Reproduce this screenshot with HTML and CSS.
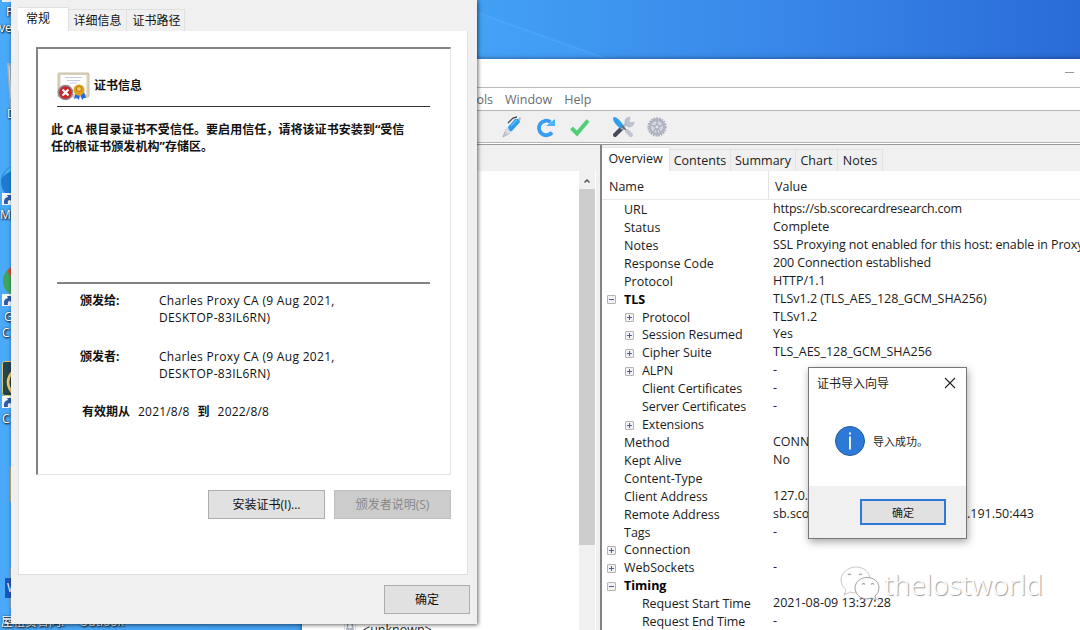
FILE: index.html
```html
<!DOCTYPE html>
<html lang="zh-CN">
<head>
    <meta charset="UTF-8">
    <meta name="viewport" content="width=device-width, initial-scale=1.0">
    <title>Charles</title>
    <link rel="stylesheet" href="styles.css">
</head>
<body>
<div class="desktop">
    <svg class="wallpaper" width="1080" height="60" viewBox="0 0 1080 60">
        <path d="M470 10 L610 60 L470 60Z" fill="#48a6ff" opacity=".3"/>
        <path d="M470 10 L610 60" stroke="#57adff" stroke-width="2" opacity=".4"/>
    </svg>

    <!-- desktop icons -->
    <svg class="icons" width="12" height="630" viewBox="0 0 12 630">
        <path d="M2 0h9v2H2z" fill="#e8eef5"/>
        <path d="M7 63h5v47h-2z" fill="#9fb4bf"/>
        <path d="M9 66l2 32" stroke="#dce6ea"/>
        <circle cx="18" cy="182" r="17" fill="#1d7cd0"/>
        <path d="M2 178q3-8 10-12v5q-6 2-10 7z" fill="#48b5e9"/>
        <circle cx="19" cy="281" r="16" fill="#40a45c"/>
        <path d="M7 271l5-5v12z" fill="#d94a3b"/>
        <rect x="2.500" y="361.500" width="30" height="34" rx="2" fill="#244450" stroke="#ddca72"/>
        <path d="M14 370q-12 12 0 25" fill="none" stroke="#f4ce62" stroke-width="2.500"/>
        <path d="M10 467h2v35h-2z" fill="#c9b47c"/>
        <path d="M10 568h2v40h-2z" fill="#98aebd"/>
        <rect x="5" y="578" width="10" height="20" fill="#1d55b8"/>
        <g fill="#f4f6f8">
            <rect x="2" y="193" width="11" height="12"/>
            <rect x="2" y="294" width="11" height="12"/>
            <rect x="2" y="396" width="11" height="12"/>
        </g>
        <g fill="#2c5da8">
            <path id="arrow" d="M4 204q-1-6 4-7l-1-2h5v7l-2-2q-3 0-2 4z"/>
            <use href="#arrow" y="101"/>
            <use href="#arrow" y="203"/>
        </g>
    </svg>
    <span class="label l1">P</span>
    <span class="label l2">ve</span>
    <span class="label l3">D</span>
    <span class="label l4">M</span>
    <span class="label l5">G</span>
    <span class="label l6">C</span>
    <span class="label l7">C</span>
    <span class="label l8">W</span>
    <span class="label l9">屋租赁合同.</span>
    <span class="label l10">Outlook</span>

    <!-- Charles main window -->
    <div class="charles">
        <div class="titlebar"><span class="minimize"></span></div>
        <div class="menu"><span>Tools</span><span>Window</span><span>Help</span></div>
        <div class="toolbar">
            <svg width="22" height="24" viewBox="0 0 22 24">
                <path d="M2 22L5 14 9 18z" fill="#c9ccda" stroke="#9da0b3" stroke-width=".7"/>
                <path d="M6 12l5 5-4 2-3-3z" fill="#d9dbe7"/>
                <path d="M7 12L14 4 18 4 19 7 11 16Q8 17 7 12z" fill="#2e9be9"/>
                <path d="M10 11l6-6" stroke="#64c0fb" stroke-width="1.500"/>
                <path d="M7 8l5-5 4-1" fill="none" stroke="#444a58" stroke-width="1.300"/>
                <path d="M17 4l2-2 1 1-1 3z" fill="#b5b9c7"/>
            </svg>
            <svg width="22" height="24" viewBox="0 0 22 24">
                <path d="M17 17.500A7.300 7.300 0 1 1 15.500 7" fill="none" stroke="#399cf4" stroke-width="3.800"/>
                <path d="M11 11h9V4z" fill="#48b2fa"/>
            </svg>
            <svg width="22" height="24" viewBox="0 0 22 24">
                <path d="M2.500 13L8 18.500 19 5.500" fill="none" stroke="#52ce79" stroke-width="4"/>
            </svg>
            <svg class="tools" width="24" height="24" viewBox="0 0 24 24">
                <path d="M4 20L12 12" stroke="#46495a" stroke-width="4" stroke-linecap="round"/>
                <path d="M10 14L17 7" stroke="#b7bac9" stroke-width="3"/>
                <path d="M14 8q-1-5 5-6l-1 4 2 2 3-1q0 5-6 5z" fill="#bfc2d0" stroke="#a2a5b8" stroke-width=".5"/>
                <path d="M3 2q4 0 10 9l-3 3Q2 8 2 3z" fill="#309fe9"/>
                <path d="M11 11l7 7" stroke="#5a6072" stroke-width="1.500"/>
                <path d="M16 16l4 4" stroke="#c1c4d2" stroke-width="4" stroke-linecap="round"/>
            </svg>
            <svg class="gear" width="22" height="24" viewBox="0 0 22 24">
                <circle cx="11" cy="12" r="8.800" fill="none" stroke="#a9adbd" stroke-width="1.800" stroke-dasharray="1.700 1"/>
                <circle cx="11" cy="12" r="7.200" fill="#d4d6df" stroke="#b0b3c2" stroke-width="2.400"/>
                <circle cx="11" cy="12" r="2.300" fill="#dfe0e7" stroke="#9da1b2"/>
                <path d="M11 6v4M11 14v4M5.300 10.200l3.800 1.200M16.700 10.200l-3.800 1.200M7.500 16.800l2.300-3.200M14.500 16.800l-2.300-3.200" stroke="#9da1b2"/>
            </svg>
        </div>
        <div class="split">
            <div class="left">
                <div class="tree">
                    <svg width="12" height="14" viewBox="0 0 12 14">
                        <path d="M0.500 0v13M11.500 0v13" stroke="#ddd"/>
                        <path d="M3.500 7V4q0-3 2.500-3t2.500 3v3" fill="none" stroke="#a9aebb" stroke-width="1.500"/>
                        <rect x="2" y="6" width="8" height="6" fill="#b6bac8"/>
                    </svg>
                    <span>&lt;unknown&gt;</span>
                </div>
                <div class="scrollbar">
                    <svg width="16" height="17" viewBox="0 0 16 17"><path d="M5.500 10.500L8 8l2.500 2.500" fill="none" stroke="#555" stroke-width="1.500"/></svg>
                    <div class="thumb"></div>
                </div>
            </div>
            <div class="right">
                <div class="tabs">
                    <span class="active">Overview</span><span>Contents</span><span>Summary</span><span>Chart</span><span>Notes</span>
                </div>
                <div class="row head"><span class="name">Name</span><span class="value">Value</span></div>
                <div class="rows">
                    <div class="row"><span class="name">URL</span><span class="value url">https://sb.scorecardresearch.com</span></div>
                    <div class="row"><span class="name">Status</span><span class="value">Complete</span></div>
                    <div class="row"><span class="name">Notes</span><span class="value long">SSL Proxying not enabled for this host: enable in Proxy</span></div>
                    <div class="row"><span class="name">Response Code</span><span class="value long">200 Connection established</span></div>
                    <div class="row"><span class="name">Protocol</span><span class="value">HTTP/1.1</span></div>
                    <div class="row"><span class="name bold"><i class="box minus"></i>TLS</span><span class="value">TLSv1.2 (TLS_AES_128_GCM_SHA256)</span></div>
                    <div class="row"><span class="name sub"><i class="box plus"></i>Protocol</span><span class="value">TLSv1.2</span></div>
                    <div class="row"><span class="name sub"><i class="box plus"></i>Session Resumed</span><span class="value">Yes</span></div>
                    <div class="row"><span class="name sub"><i class="box plus"></i>Cipher Suite</span><span class="value">TLS_AES_128_GCM_SHA256</span></div>
                    <div class="row"><span class="name sub"><i class="box plus"></i>ALPN</span><span class="value">-</span></div>
                    <div class="row"><span class="name sub">Client Certificates</span><span class="value">-</span></div>
                    <div class="row"><span class="name sub">Server Certificates</span><span class="value">-</span></div>
                    <div class="row"><span class="name sub"><i class="box plus"></i>Extensions</span><span class="value"></span></div>
                    <div class="row"><span class="name">Method</span><span class="value">CONNECT</span></div>
                    <div class="row"><span class="name">Kept Alive</span><span class="value">No</span></div>
                    <div class="row"><span class="name">Content-Type</span><span class="value"></span></div>
                    <div class="row"><span class="name">Client Address</span><span class="value">127.0.0.1</span></div>
                    <div class="row"><span class="name">Remote Address</span><span class="value remote"><span>sb.scorecard</span><span>6.191.50:443</span></span></div>
                    <div class="row"><span class="name">Tags</span><span class="value">-</span></div>
                    <div class="row"><span class="name"><i class="box plus"></i>Connection</span><span class="value"></span></div>
                    <div class="row"><span class="name"><i class="box plus"></i>WebSockets</span><span class="value">-</span></div>
                    <div class="row"><span class="name bold"><i class="box minus"></i>Timing</span><span class="value"></span></div>
                    <div class="row"><span class="name sub">Request Start Time</span><span class="value">2021-08-09 13:37:28</span></div>
                    <div class="row"><span class="name sub">Request End Time</span><span class="value">-</span></div>
                </div>
            </div>
        </div>
    </div>

    <!-- certificate properties -->
    <div class="cert">
        <div class="cert-tabs"><span class="active">常规</span><span>详细信息</span><span>证书路径</span></div>
        <div class="page">
            <div class="panel">
                <div class="cert-title">
                    <svg width="33" height="29" viewBox="0 0 33 29">
                        <rect x="1" y="1" width="31" height="24" rx="1" fill="#d9d1bb" stroke="#c9c0a8"/>
                        <rect x="3.500" y="3" width="26" height="19" fill="#fdfdfd"/>
                        <path d="M8 5.500h17M10 8.500h13M13 11h7" stroke="#c9cce0"/>
                        <path d="M19 20l-2 7 3-1 2 2 1-7 2 7 2-2 2 0-2-6z" fill="#2668e0"/>
                        <circle cx="22" cy="18" r="5.500" fill="#dfa01f"/>
                        <circle cx="22" cy="17" r="2.500" fill="#f3c85a" stroke="#b97a10"/>
                        <circle cx="8.500" cy="20.500" r="7.800" fill="#8c8c8c"/>
                        <circle cx="8.500" cy="20.500" r="6.300" fill="#c9252b"/>
                        <path d="M5.500 17.500l6 6M11.500 17.500l-6 6" stroke="#fff" stroke-width="2.200"/>
                    </svg>
                    <b>证书信息</b>
                </div>
                <p class="warning">此 CA 根目录证书不受信任。要启用信任，请将该证书安装到“受信<br>任的根证书颁发机构”存储区。</p>
                <div class="fields">
                    <div class="field"><b>颁发给:</b><span>Charles Proxy CA (9 Aug 2021,<br>DESKTOP-83IL6RN)</span></div>
                    <div class="field"><b>颁发者:</b><span>Charles Proxy CA (9 Aug 2021,<br>DESKTOP-83IL6RN)</span></div>
                    <div class="valid"><b>有效期从</b><span>2021/8/8</span><b>到</b><span>2022/8/8</span></div>
                </div>
            </div>
            <div class="actions">
                <span class="button">安装证书(I)...</span>
                <span class="button disabled">颁发者说明(S)</span>
            </div>
        </div>
        <div class="footer"><span class="button ok">确定</span></div>
    </div>

    <!-- import wizard message -->
    <div class="message">
        <div class="message-title">
            <span>证书导入向导</span>
            <svg width="12" height="12" viewBox="0 0 12 12"><path d="M1 1l10 10M11 1L1 11" stroke="#222" stroke-width="1.100"/></svg>
        </div>
        <div class="message-body">
            <svg width="30" height="30" viewBox="0 0 30 30">
                <circle cx="15" cy="15" r="14.500" fill="#2d79d8" stroke="#205d9c"/>
                <path d="M15 10.500V23.500M15 6.500v2" stroke="#fff" stroke-width="1.800"/>
            </svg>
            <span>导入成功。</span>
        </div>
        <div class="message-footer"><span class="button focus">确定</span></div>
    </div>

    <div class="watermark">
        <svg width="42" height="36" viewBox="0 0 42 36">
            <g fill="#fff" stroke="#a3a3a3" stroke-width="1">
                <path d="M16 1C8 1 1 7 1 14q0 6 5 10l-2 5 6-3q3 1 7 1C25 27 30 22 30 14S24 1 16 1z" stroke="#c8c8c8"/>
                <path d="M27 11.500c-7 0-12 5-12 10.500s5 11 12 11l5-1 4 2-1-4q4-3 4-8c0-6-5-10.500-12-10.500z"/>
            </g>
            <path d="M8 9q1.500-2 3 0M19 9q1.500-2 3 0M22 18.500q1.500-2 3 0M31 18.500q1.500-2 3 0" fill="none" stroke="#999" stroke-width="1.200"/>
        </svg>
        <span>thelostworld</span>
    </div>
</div>
</body>
</html>
```
FILE: styles.css
```css
body {
    margin: 0;
    font-family: "Open Sans", "Noto Sans CJK SC", sans-serif;
    font-size: 12.5px;
    color: #1b1b1b;
}
.desktop {
    position: relative;
    width: 1080px;
    height: 630px;
    overflow: hidden;
    background: linear-gradient(90deg, #4aa9f8 0, #429ff3 45%, #3785e8 75%, #2a6bd8 100%);
}
.wallpaper, .icons {
    position: absolute;
    left: 0;
    top: 0;
}
.label {
    position: absolute;
    color: #fff;
    font-size: 12px;
    line-height: 16px;
    white-space: nowrap;
    text-shadow: 1px 1px 2px #000, 0 0 2px #234;
}
.l1 { left: 6px; top: 4px; }
.l2 { left: -1px; top: 20px; }
.l3 { left: 7px; top: 106px; }
.l4 { left: 0; top: 207px; }
.l5 { left: 4px; top: 309px; }
.l6 { left: 2px; top: 325px; }
.l7 { left: 2px; top: 411px; }
.l8 { left: 7px; top: 580px; text-shadow: none; }
.l9 { left: 1px; top: 614px; }
.l10 { left: 79px; top: 614px; }

/* main window */
.charles {
    position: absolute;
    left: 302px;
    top: 59px;
    width: 800px;
    height: 600px;
    background: #fff;
    box-shadow: 0 0 5px rgba(0, 0, 0, .5);
    display: flex;
    flex-direction: column;
}
.titlebar {
    height: 28px;
    border-bottom: 1px solid #bbb;
    display: flex;
}
.minimize {
    width: 9px;
    height: 1px;
    margin: 13px 0 0 763px;
    background: #999;
}
.menu {
    height: 22px;
    display: flex;
    align-items: center;
    color: #6c6c6c;
    padding-left: 160px;
    border-bottom: 1px solid #b5b5b5;
}
.menu span {
    padding-top: 1px;
}
.menu span + span {
    margin-left: 12px;
}
.toolbar {
    height: 31px;
    background: #f0f0f0;
    border-bottom: 1px solid #b4b4b4;
    display: flex;
    align-items: center;
    gap: 12px;
    padding: 0 0 0 199px;
}
.toolbar .tools {
    margin-left: 8px;
}
.toolbar .gear {
    margin-left: -1px;
}
.split {
    flex: 1;
    margin-top: 1px;
    border-top: 1px solid #9b9b9b;
    display: flex;
    min-height: 0;
}
.left {
    width: 298px;
    box-sizing: border-box;
    border-top: 26px solid #f0f0f0;
    border-right: 4px solid #f0f0f0;
    display: flex;
    justify-content: space-between;
}
.tree {
    display: flex;
    align-items: center;
    gap: 7px;
    height: 20px;
    padding: 448px 0 0 42px;
}
.scrollbar {
    width: 16px;
    background: #f0f0f0;
    margin-right: 1px;
}
.scrollbar svg {
    display: block;
    margin-top: 1px;
}
.thumb {
    height: 356px;
    background: #cdcdcd;
}
.right {
    flex: 1;
    border-left: 2px solid #838383;
}
.tabs {
    height: 26px;
    background: #f0f0f0;
    display: flex;
    align-items: flex-end;
}
.tabs span {
    height: 22px;
    line-height: 22px;
    box-sizing: border-box;
    border: 1px solid #e3e3e3;
    border-left: 0;
    border-bottom: 0;
    text-align: center;
    width: 45px;
}
.tabs .active {
    width: 68px;
    height: 24px;
    background: #fff;
}
.tabs .active + span { width: 61px; }
.tabs .active + span + span { width: 65px; }
.tabs .active + span + span + span { width: 42px; }
.row {
    display: flex;
    height: 17.930px;
    line-height: 18px;
    white-space: nowrap;
}
.rows {
    padding-top: 1px;
}
.name {
    width: 145px;
    padding-left: 22px;
    display: flex;
    align-items: center;
}
.sub {
    width: 127px;
    padding-left: 40px;
    letter-spacing: -.1px;
}
.value {
    margin: -1px 0 0 4px;
}
.url {
    letter-spacing: -.22px;
}
.long {
    letter-spacing: -.12px;
}
.bold {
    font-weight: bold;
    color: #000;
}
.head {
    height: 28px;
    line-height: 30px;
    border-bottom: 1px solid #e8e8e8;
}
.head .name {
    width: 159px;
    padding: 3px 0 0 7px;
    box-sizing: content-box;
    height: 25px;
    border-right: 1px solid #e3e3e3;
}
.head .value {
    margin: 1px 0 0 6px;
}
.remote {
    display: flex;
    width: 261px;
    justify-content: space-between;
}
.box {
    width: 7px;
    height: 7px;
    border: 1px solid #b3b3b3;
    border-radius: 1px;
    margin: 0 8px 0 -17px;
    background: linear-gradient(#4a61a8, #4a61a8) center / 5px 1px no-repeat, #f2f2f2;
}
.sub .box {
    margin: 0 8px 0 -17px;
}
.plus {
    background: linear-gradient(#4a61a8, #4a61a8) center / 5px 1px no-repeat, linear-gradient(#4a61a8, #4a61a8) center / 1px 5px no-repeat, #f2f2f2;
}

/* certificate window */
.cert {
    position: absolute;
    left: 11px;
    top: 0;
    width: 466px;
    height: 624px;
    background: #f0f0f0;
    box-shadow: 1px 1px 4px rgba(0, 0, 0, .6);
    font-size: 12px;
    color: #111;
}
.cert-tabs {
    display: flex;
    align-items: flex-end;
    height: 31px;
    padding-left: 7px;
}
.cert-tabs span {
    box-sizing: border-box;
    height: 22px;
    line-height: 21px;
    width: 58px;
    border: 1px solid #e0e0e0;
    border-width: 1px 1px 0 0;
    text-align: center;
}
.cert-tabs span:last-child {
    padding-left: 2px;
}
.cert-tabs .active {
    width: 51px;
    height: 24px;
    line-height: 22px;
    padding-right: 10px;
    background: #fff;
}
.page {
    box-sizing: border-box;
    width: 450px;
    height: 544px;
    margin-left: 7px;
    padding: 16px 16px 0 17px;
    background: #fff;
    border: 1px solid #e0e0e0;
    border-top: 0;
}
.panel {
    box-sizing: border-box;
    width: 415px;
    height: 428px;
    border: 1px solid #e3e3e3;
    border-top: 2px solid #838383;
    border-left: 2px solid #838383;
    padding: 23px 20px 0 13px;
}
.cert-title {
    display: flex;
    align-items: center;
    gap: 4px;
    height: 34px;
    margin-left: 6px;
    border-bottom: 1px solid #333;
}
.cert-title svg {
    margin-top: -6px;
}
.cert-title b {
    margin-top: -8px;
}
.warning {
    margin: 14px -12px 0 0;
    font-weight: bold;
    line-height: 17px;
    white-space: nowrap;
    height: 161px;
    letter-spacing: .06px;
}
.fields {
    margin-left: 6px;
    border-top: 2px solid #838383;
    padding-top: 8px;
}
.field {
    display: flex;
    line-height: 17px;
    padding-left: 23px;
    height: 56px;
}
.field b {
    width: 79px;
}
.field span {
    letter-spacing: .31px;
}
.valid {
    display: flex;
    gap: 8px;
    line-height: 17px;
    padding-left: 25px;
    margin-top: -1px;
}
.valid span {
    letter-spacing: .2px;
}
.actions {
    display: flex;
    justify-content: flex-end;
    gap: 9px;
    margin: 15px 0 0;
}
.button {
    box-sizing: border-box;
    width: 117px;
    height: 29px;
    line-height: 28px;
    border: 1px solid #adadad;
    background: #e1e1e1;
    text-align: center;
}
.disabled {
    background: #ccc;
    border-color: #bfbfbf;
    color: #888;
}
.footer {
    display: flex;
    justify-content: flex-end;
    padding: 10px 7px 0 0;
}
.ok {
    width: 86px;
}

/* message box */
.message {
    position: absolute;
    left: 808px;
    top: 367px;
    box-sizing: border-box;
    width: 159px;
    height: 172px;
    border: 1px solid #777;
    background: #fff;
    box-shadow: 1px 3px 8px rgba(0, 0, 0, .35);
    display: flex;
    flex-direction: column;
    font-size: 12px;
}
.message-title {
    display: flex;
    justify-content: space-between;
    align-items: center;
    height: 29px;
    padding: 0 10px 0 8px;
}
.message-body {
    flex: 1;
    display: flex;
    align-items: center;
    gap: 8px;
    padding: 0 0 1px 26px;
    font-size: 11px;
}
.message-footer {
    height: 52px;
    background: #f0f0f0;
    display: flex;
    justify-content: flex-end;
    align-items: center;
    padding-right: 20px;
    font-size: 11px;
}
.focus {
    width: 86px;
    height: 26px;
    line-height: 23px;
    border: 2px solid #2d79d8;
}

.watermark {
    position: absolute;
    left: 840px;
    top: 565px;
    display: flex;
    align-items: center;
    gap: 2px;
    height: 37px;
    font-family: "Noto Sans", sans-serif;
    font-weight: 300;
    font-size: 28px;
    color: #fff;
    text-shadow: 1px 1px 1px #999;
}
```
